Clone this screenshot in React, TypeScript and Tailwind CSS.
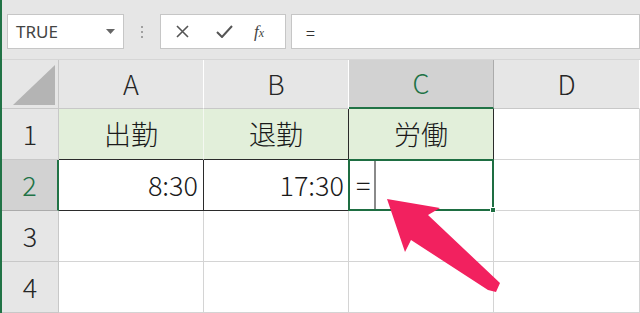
import React from 'react'

const font = { fontFamily: '"Noto Sans CJK JP", "Noto Sans", sans-serif' }

function Corner() {
  return (
    <div className="relative border-r border-b border-[#c8c8c8] bg-[#e6e6e6]">
      <svg className="absolute right-[3px] bottom-[3px]" width="42" height="40" viewBox="0 0 42 40">
        <polygon points="42,0 42,40 0,40" fill="#b4b4b4" />
      </svg>
    </div>
  )
}

function ColHead({ label, active = false }: { label: string; active?: boolean }) {
  return (
    <div
      className={`flex items-center justify-center text-[27px] font-light ${
        active
          ? 'bg-[#d2d2d2] text-[#217346] border-b-2 border-b-[#217346] border-r border-r-[#ababab]'
          : 'bg-[#e6e6e6] text-[#262626] border-b border-b-[#c8c8c8] border-r border-r-[#ffffff]'
      }`}
    >
      {label}
    </div>
  )
}

function RowHead({ label, active = false }: { label: string; active?: boolean }) {
  return (
    <div
      className={`flex items-center justify-center text-[27px] font-light ${
        active
          ? 'bg-[#d2d2d2] text-[#217346] border-r-2 border-r-[#217346] border-b border-b-[#ababab]'
          : 'bg-[#e6e6e6] text-[#262626] border-r border-r-[#c8c8c8] border-b border-b-[#c8c8c8]'
      }`}
    >
      {label}
    </div>
  )
}

function Cell({ children, className = '' }: { children?: React.ReactNode; className?: string }) {
  return <div className={`flex items-center text-[27px] font-light text-[#1a1a1a] ${className}`}>{children}</div>
}

export default function App() {
  return (
    <div className="w-[640px] h-[313px] overflow-hidden relative bg-white border-l-2 border-[#217346]" style={font}>
      {/* toolbar */}
      <div className="h-[60px] bg-[#e6e6e6] flex items-start pt-[14px] border-b border-[#d6d6d6]">
        <div className="ml-[5px] w-[117px] h-[35px] bg-white border border-[#c6c6c6] flex items-center pl-[8px] pr-[8px] justify-between">
          <span className="text-[17px] text-[#444]" style={{ fontFamily: '"Noto Sans", sans-serif' }}>
            TRUE
          </span>
          <svg width="9" height="5" viewBox="0 0 9 5">
            <polygon points="0,0 9,0 4.5,5" fill="#666" />
          </svg>
        </div>
        <div className="w-[36px] h-[35px] flex flex-col items-center justify-center gap-[3px]">
          <span className="w-[2px] h-[2px] bg-[#a0a0a0]" />
          <span className="w-[2px] h-[2px] bg-[#a0a0a0]" />
          <span className="w-[2px] h-[2px] bg-[#a0a0a0]" />
        </div>
        <div className="w-[126px] h-[35px] bg-white border border-[#c6c6c6] flex items-center">
          <svg className="ml-[15px]" width="13" height="13" viewBox="0 0 13 13">
            <path d="M1 1 L12 12 M12 1 L1 12" stroke="#555" strokeWidth="1.6" />
          </svg>
          <svg className="ml-[27px]" width="17" height="13" viewBox="0 0 17 13">
            <path d="M1 7 L6 12 L16 1" stroke="#555" strokeWidth="2" fill="none" />
          </svg>
          <span
            className="ml-[21px] text-[17px] italic text-[#444]"
            style={{ fontFamily: '"Liberation Serif", serif' }}
          >
            f<span className="text-[12px]">x</span>
          </span>
        </div>
        <div className="ml-[5px] flex-1 h-[35px] bg-white border border-[#c6c6c6] flex items-center pl-[14px]">
          <span className="text-[16px] text-[#333]">=</span>
        </div>
      </div>

      {/* sheet grid */}
      <div className="grid grid-cols-[57px_145px_145px_145px_1fr] grid-rows-[49px_51px_51px_51px_51px]">
        <Corner />
        <ColHead label="A" />
        <ColHead label="B" />
        <ColHead label="C" active />
        <ColHead label="D" />

        <RowHead label="1" />
        <Cell className="justify-center bg-[#e2efda] border-r border-r-[#f4f8f1] border-b border-b-[#2b2b2b]">出勤</Cell>
        <Cell className="justify-center bg-[#e2efda] border-r border-r-[#2b2b2b] border-b border-b-[#2b2b2b]">退勤</Cell>
        <Cell className="justify-center bg-[#e2efda] border-r border-r-[#2b2b2b] border-b border-b-[#1e5e3a]">労働</Cell>
        <Cell className="border-r border-r-[#d4d4d4] border-b border-b-[#d4d4d4]" />

        <RowHead label="2" active />
        <Cell className="justify-end pr-[5px] border-r border-r-[#2b2b2b] border-b border-b-[#2b2b2b]">8:30</Cell>
        <Cell className="justify-end pr-[4px] border-r border-r-[#2b2b2b] border-b border-b-[#2b2b2b]">17:30</Cell>
        <div className="relative -ml-px -mt-px border-2 border-[#1e6e42] flex items-center">
          <span className="ml-[6px] text-[27px] font-light text-[#1a1a1a]">=</span>
          <span className="ml-[4px] w-[2px] h-full bg-[#8a8a8a]" />
          <span className="absolute -right-[4px] -bottom-[4px] w-[6px] h-[6px] bg-[#1e6e42] border border-white" />
        </div>
        <Cell className="border-r border-r-[#d4d4d4] border-b border-b-[#d4d4d4]" />

        <RowHead label="3" />
        <Cell className="border-r border-r-[#d4d4d4] border-b border-b-[#d4d4d4]" />
        <Cell className="border-r border-r-[#d4d4d4] border-b border-b-[#d4d4d4]" />
        <Cell className="border-r border-r-[#d4d4d4] border-b border-b-[#d4d4d4]" />
        <Cell className="border-r border-r-[#d4d4d4] border-b border-b-[#d4d4d4]" />

        <RowHead label="4" />
        <Cell className="border-r border-r-[#d4d4d4] border-b border-b-[#d4d4d4]" />
        <Cell className="border-r border-r-[#d4d4d4] border-b border-b-[#d4d4d4]" />
        <Cell className="border-r border-r-[#d4d4d4] border-b border-b-[#d4d4d4]" />
        <Cell className="border-r border-r-[#d4d4d4] border-b border-b-[#d4d4d4]" />
      </div>

      {/* pink arrow overlay */}
      <svg className="absolute left-0 top-0 pointer-events-none" width="640" height="313" viewBox="0 0 640 313">
        <polygon
          points="387,199 440,208 428,215 500,283 496,292 488,290 411,240 405,252"
          fill="#f2215f"
          transform="translate(-2,0)"
        />
      </svg>
    </div>
  )
}
